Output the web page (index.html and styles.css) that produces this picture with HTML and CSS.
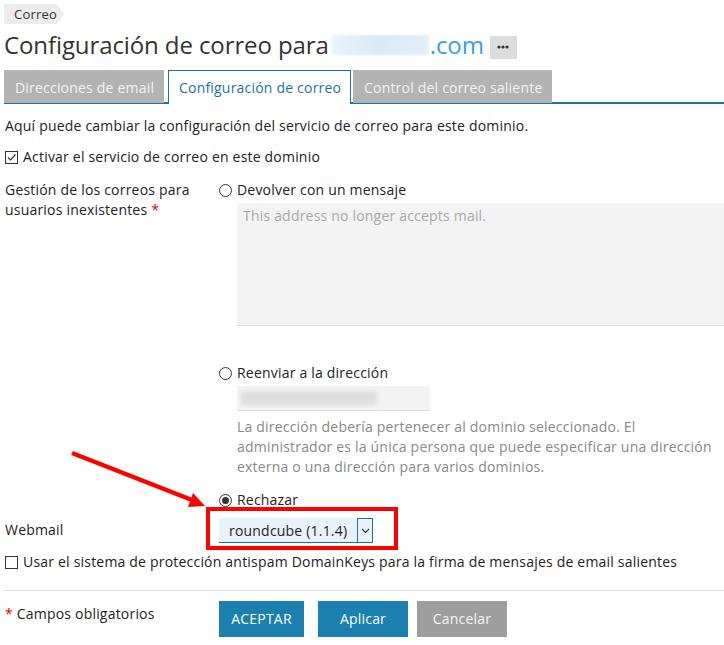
FILE: index.html
```html
<!DOCTYPE html>
<html lang="es">
<head>
<meta charset="utf-8">
<title>Configuración de correo</title>
<link rel="stylesheet" href="styles.css">
</head>
<body>
<div class="page">
  <div class="crumb"><span class="crumb-text">Correo</span></div>
  <h1 class="title">Configuración de correo para <span class="blur-domain"></span><span class="dom">.com</span> <span class="more"><svg viewBox="0 0 12 4" width="12" height="4"><circle cx="2" cy="2" r="1.6" fill="#333"/><circle cx="6" cy="2" r="1.6" fill="#333"/><circle cx="10" cy="2" r="1.6" fill="#333"/></svg></span></h1>

  <div class="tabs">
    <div class="tab">Direcciones de email</div>
    <div class="tab active">Configuración de correo</div>
    <div class="tab">Control del correo saliente</div>
  </div>

  <p class="intro">Aquí puede cambiar la configuración del servicio de correo para este dominio.</p>

  <div class="check-line"><span class="cbox checked"><svg viewBox="0 0 13 13" width="13" height="13"><rect x="0.5" y="0.5" width="12" height="12" fill="#fff" stroke="#333"/><path d="M3 6.5 L5.5 9 L10.5 3.5" fill="none" stroke="#333" stroke-width="1.2"/></svg></span>Activar el servicio de correo en este dominio</div>

  <div class="row">
    <div class="label">Gestión de los correos para usuarios inexistentes <span class="req">*</span></div>
    <div class="field">
      <div class="radio-line"><span class="radio"></span>Devolver con un mensaje</div>
      <div class="textarea">This address no longer accepts mail.</div>

      <div class="radio-line r2"><span class="radio"></span>Reenviar a la dirección</div>
      <div class="input"><span class="blur-addr"></span></div>
      <div class="hint">La dirección debería pertenecer al dominio seleccionado. El administrador es la única persona que puede especificar una dirección externa o una dirección para varios dominios.</div>

      <div class="radio-line r3"><span class="radio on"></span>Rechazar</div>
    </div>
  </div>

  <div class="row webmail">
    <div class="label wm-label">Webmail</div>
    <div class="field">
      <div class="select"><span class="sel-text">roundcube (1.1.4)</span><span class="sel-btn"><svg viewBox="0 0 9 6" width="9" height="6"><path d="M1 1 L4.5 4.5 L8 1" fill="none" stroke="#333" stroke-width="1.1"/></svg></span></div>
    </div>
  </div>

  <div class="check-line dk"><span class="cbox"><svg viewBox="0 0 13 13" width="13" height="13"><rect x="0.5" y="0.5" width="12" height="12" fill="#fff" stroke="#333"/></svg></span>Usar el sistema de protección antispam DomainKeys para la firma de mensajes de email salientes</div>

  <div class="footer">
    <div class="req-note"><span class="req">*</span> Campos obligatorios</div>
    <div class="buttons">
      <span class="btn primary">ACEPTAR</span>
      <span class="btn primary">Aplicar</span>
      <span class="btn grey">Cancelar</span>
    </div>
  </div>

  <div class="redbox"></div>
  <svg class="arrow" width="724" height="645" viewBox="0 0 724 645">
    <line x1="72" y1="453" x2="192" y2="500" stroke="#f00" stroke-width="4.5"/>
    <polygon points="205,506 188,507 193,493" fill="#f00"/>
  </svg>
</div>
</body>
</html>
```

FILE: styles.css
```css
* { box-sizing: border-box; }
html, body { margin: 0; padding: 0; background: #fff; }
body {
  font-family: "Open Sans", "Noto Sans", "DejaVu Sans", sans-serif;
  font-size: 14px;
  line-height: 20px;
  letter-spacing: 0.2px;
  color: #222;
}
.page {
  position: relative;
  width: 724px;
  height: 645px;
  padding: 4px 0 0 4px;
  overflow: hidden;
}
.crumb {
  display: inline-flex;
  align-items: center;
  height: 20px;
  background: #ececec;
  padding: 0 0 0 10px;
  position: relative;
  margin-right: 10px;
}
.crumb::after {
  content: "";
  position: absolute;
  right: -7px;
  top: 0;
  border-left: 7px solid #ececec;
  border-top: 10px solid transparent;
  border-bottom: 10px solid transparent;
}
.crumb-text { font-size: 13px; color: #333; line-height: 20px; }
.title {
  margin: 5px 0 0 0;
  font-size: 24px;
  line-height: 32px;
  font-weight: normal;
  letter-spacing: -0.1px;
  color: #333;
  display: flex;
  align-items: center;
  white-space: nowrap;
}
.blur-domain {
  display: inline-block;
  width: 97px;
  height: 20px;
  margin-left: 3px;
  background: linear-gradient(90deg, #e8f3fb, #d8e9f7 50%, #e2eff9);
  filter: blur(1px);
}
.dom { color: #3a9fe0; margin-left: 1px; }
.more {
  display: inline-flex;
  align-items: center;
  justify-content: center;
  width: 27px;
  height: 23px;
  margin-left: 6px;
  margin-top: 4px;
  background: #dcdcdc;
}
.more svg { display: block; }
.tabs {
  margin-top: 9px;
  display: flex;
  gap: 4px;
  border-bottom: 2px solid #1a73a4;
  height: 34px;
}
.tab {
  height: 33px;
  padding: 0 11px;
  background: #b3b3b3;
  color: #f2f2f2;
  line-height: 35px;
  white-space: nowrap;
}
.tab:nth-child(1) { width: 160px; }
.tab:nth-child(2) { width: 183px; }
.tab:nth-child(3) { width: 199px; margin-left: -2px; }
.tab.active {
  background: #fff;
  color: #1a73a4;
  border: 1px solid #1a73a4;
  border-bottom: none;
  height: 34px;
  line-height: 34px;
  padding: 0 10px;
}
.intro { margin: 12px 0 0 1px; }
.check-line {
  display: flex;
  align-items: center;
  margin-top: 11px;
  margin-left: 1px;
}
.cbox { display: inline-flex; margin-right: 5px; }
.cbox svg { display: block; }
.row {
  display: grid;
  grid-template-columns: 215px 1fr;
  margin-top: 13px;
}
.label { padding-left: 1px; padding-right: 16px; }
.req { color: #d00; }
.radio-line { display: flex; align-items: center; }
.radio {
  width: 13px;
  height: 13px;
  border: 1px solid #333;
  border-radius: 50%;
  margin-right: 5px;
  background: #fff;
  position: relative;
}
.radio.on::after {
  content: "";
  position: absolute;
  left: 2px; top: 2px;
  width: 7px; height: 7px;
  border-radius: 50%;
  background: #333;
}
.textarea {
  margin: 3px 0 0 18px;
  height: 123px;
  background: #f3f3f3;
  border-bottom: 1px solid #dcdcdc;
  color: #a9a9a9;
  padding: 3px 6px;
}
.r2 { margin-top: 37px; }
.input {
  margin: 3px 0 0 18px;
  width: 193px;
  height: 25px;
  background: #f3f3f3;
  border-bottom: 1px solid #dcdcdc;
  display: flex;
  align-items: center;
}
.blur-addr {
  display: block;
  width: 136px;
  height: 14px;
  margin-left: 4px;
  background: #dedede;
  filter: blur(2px);
}
.hint {
  margin: 6px 0 0 18px;
  color: #888;
}
.r3 { margin-top: 13px; }
.webmail { margin-top: 8px; }
.wm-label { padding-top: 2px; }
.select {
  display: flex;
  width: 154px;
  height: 25px;
  background: #e9f2fa;
  border-bottom: 1px solid #1a73a4;
}
.sel-text { flex: 1; padding-left: 10px; line-height: 25px; color: #222; }
.sel-btn {
  width: 16px;
  height: 25px;
  border: 1px solid #1a73a4;
  background: #e9f2fa;
  display: flex;
  align-items: center;
  justify-content: center;
}
.dk { margin-top: 9px; }
.footer {
  margin-top: 18px;
  border-top: 1px solid #ddd;
  display: grid;
  grid-template-columns: 215px 1fr;
  padding-top: 10px;
}
.req-note { padding-left: 1px; line-height: 20px; margin-top: 3px; }
.buttons { display: flex; }
.btn {
  display: inline-block;
  height: 36px;
  line-height: 36px;
  color: #fff;
  text-align: center;
}
.btn.primary { background: #1a80b0; }
.btn:nth-child(1) { width: 85px; }
.btn:nth-child(2) { width: 90px; margin-left: 14px; }
.btn:nth-child(3) { width: 90px; margin-left: 9px; }
.btn.grey { background: #9e9e9e; color: #f4f4f4; }
.redbox {
  position: absolute;
  left: 206px;
  top: 507px;
  width: 192px;
  height: 43px;
  border: 4px solid #f00;
}
.arrow { position: absolute; left: 0; top: 0; pointer-events: none; }
```
